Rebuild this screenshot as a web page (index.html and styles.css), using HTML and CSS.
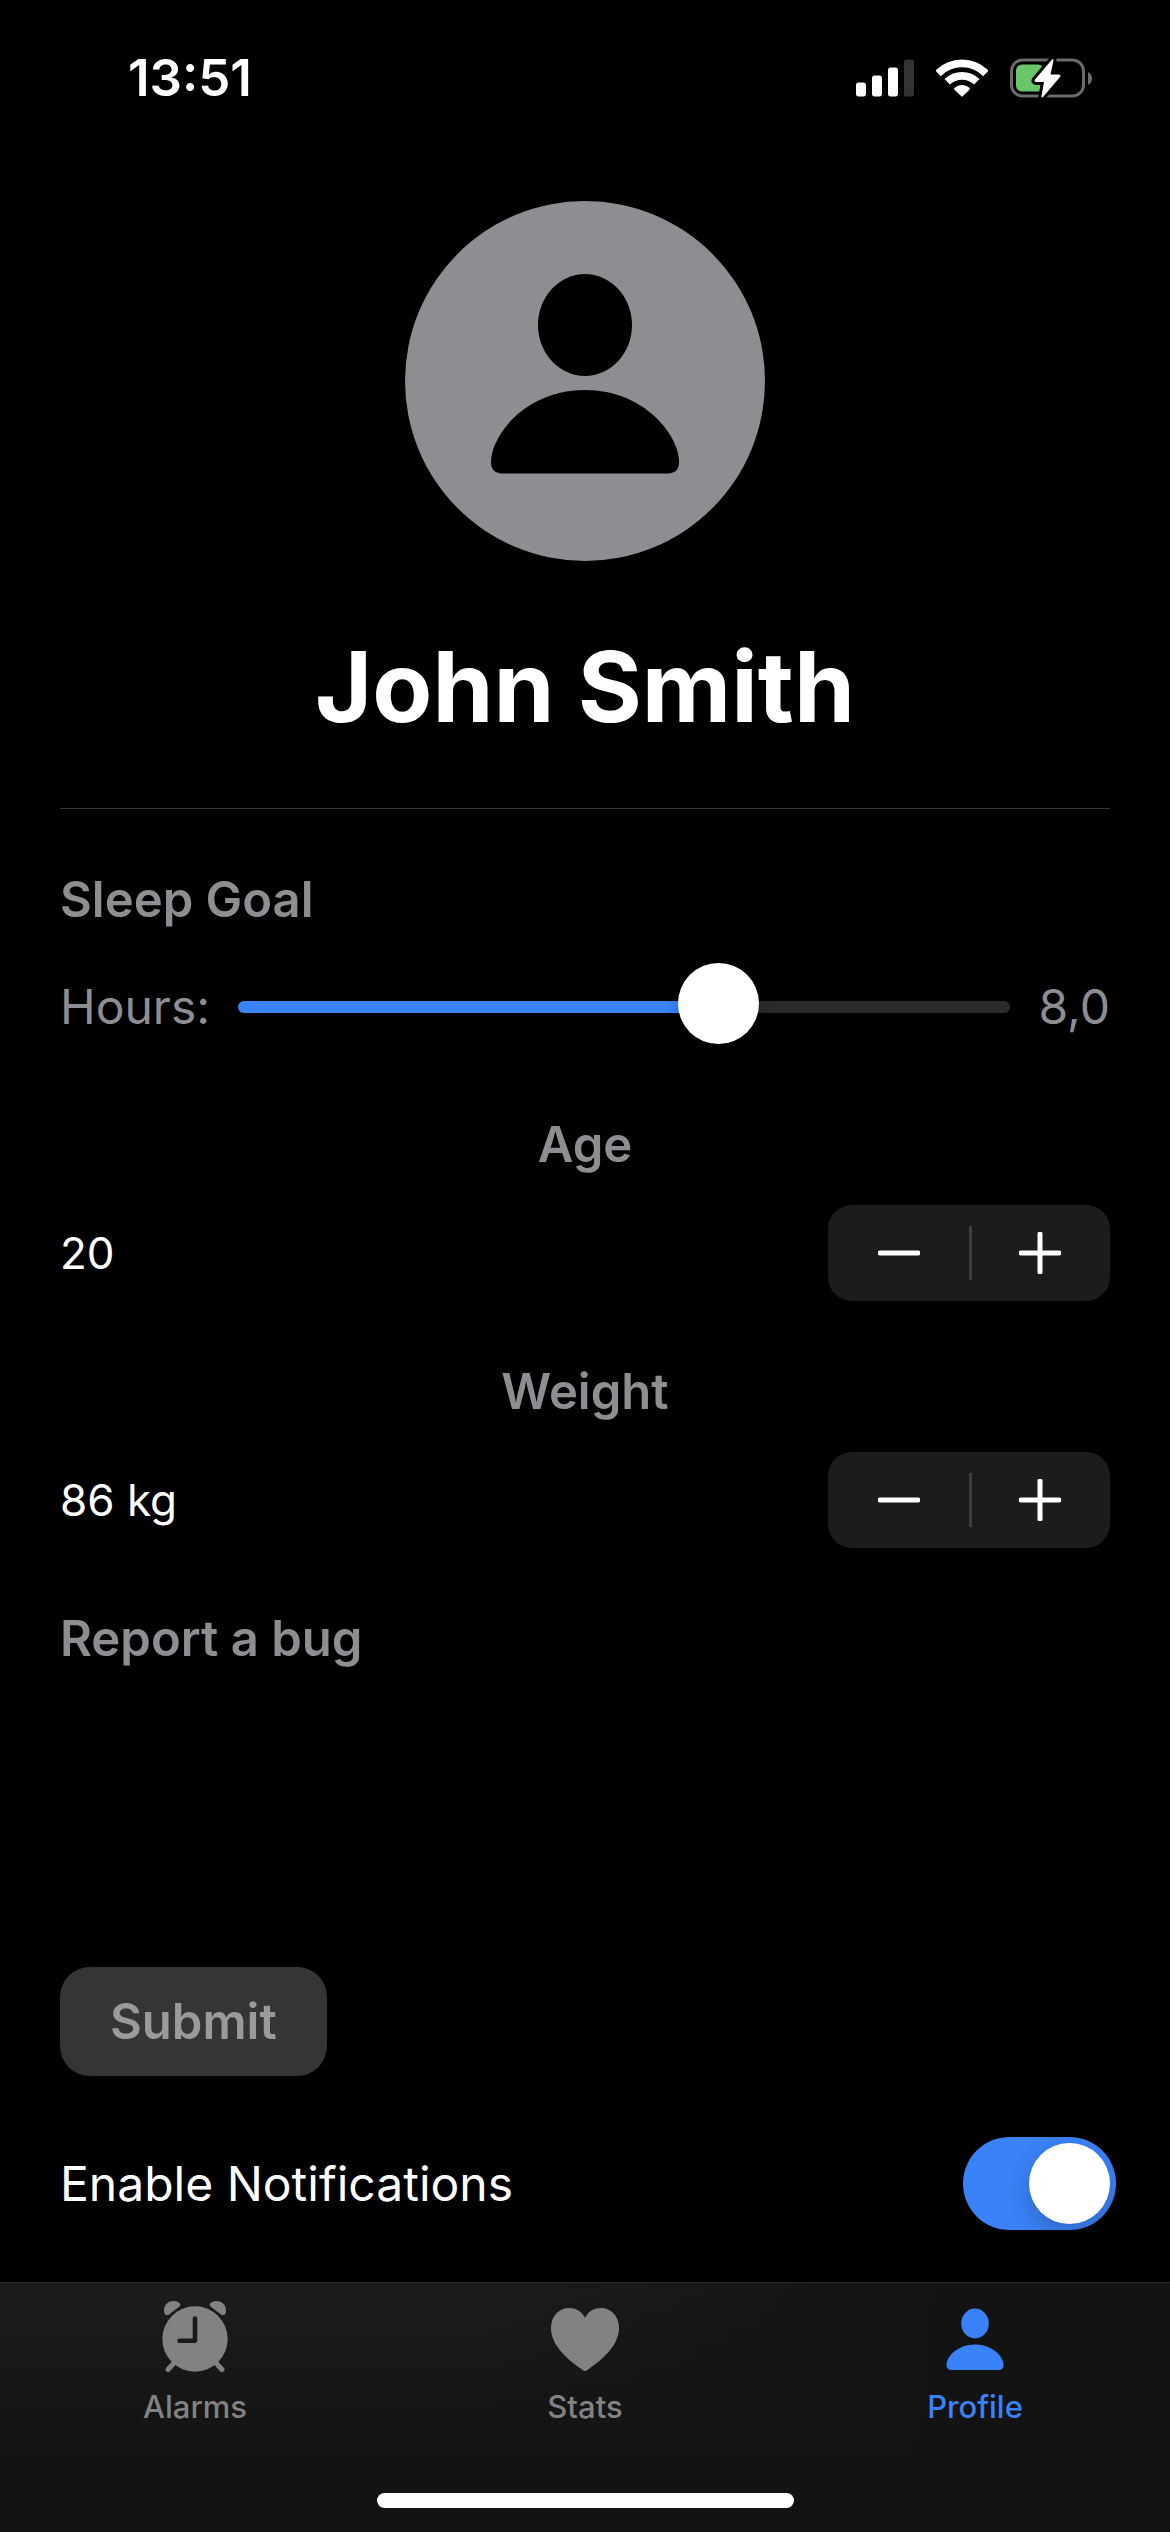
FILE: index.html
```html
<!DOCTYPE html>
<html lang="en">
<head>
<meta charset="utf-8">
<meta name="viewport" content="width=device-width, initial-scale=1">
<title>Profile</title>
<link rel="stylesheet" href="styles.css">
</head>
<body>
<header class="status-bar">
  <time class="clock">13:51</time>
  <div class="status-icons">
    <svg class="icon-signal" viewBox="78 56 174 113" role="img" aria-label="Signal">
      <g fill="#fff">
        <rect x="78" y="126" width="30" height="42" rx="8"/>
        <rect x="126" y="105" width="30" height="63" rx="8"/>
        <rect x="174" y="81" width="30" height="87" rx="8"/>
      </g>
      <rect x="222" y="57" width="30" height="111" rx="8" fill="#333"/>
    </svg>
    <svg class="icon-wifi" viewBox="318 56 154 113" role="img" aria-label="Wi-Fi">
      <g fill="none" stroke="#fff" stroke-width="23">
        <path d="M324 99A99.500 99.500 0 0 1 466 99"/>
        <path d="M351 124A62.500 62.500 0 0 1 439 124"/>
      </g>
      <path fill="#fff" d="M371 144Q381 133 395 133T419 144Q418 147 415 150L397 167Q395 169 393 167L375 150Q372 147 371 144Z"/>
    </svg>
    <svg class="icon-battery" viewBox="0 0 82 40" role="img" aria-label="Battery charging">
      <rect x="1.500" y="2" width="72" height="36" rx="11" fill="none" stroke="#6b6b6b" stroke-width="3"/>
      <path d="M78 14Q82 16 82 20.500T78 27Z" fill="#6b6b6b"/>
      <rect x="6" y="6.500" width="28" height="27" rx="6" fill="#67c667"/>
      <path d="M42 1.500Q43.500 0 43.500 2.500L40.500 16.500H49Q51.500 17 50 19L33 39Q31 40.500 31.500 38L34 24H26Q23.500 23.500 25 21.500Z" fill="#fff" stroke="#000" stroke-width="6" paint-order="stroke" stroke-linejoin="round"/>
    </svg>
  </div>
</header>

<main class="profile">
  <section class="identity">
    <svg class="avatar" viewBox="0 0 360 360" role="img" aria-label="Profile picture">
      <circle cx="180" cy="180" r="180" fill="#8e8d92"/>
      <ellipse cx="180" cy="124" rx="47" ry="51"/>
      <path d="M97 272.500Q86 272 86 261C86 235 120 189 180 189S274 235 274 261Q274 272 263 272.500Z"/>
    </svg>
    <h1 class="name">John Smith</h1>
  </section>
  <hr class="divider">

  <section class="group">
    <h2 class="heading">Sleep Goal</h2>
    <div class="row slider-row">
      <label class="muted" for="hours">Hours:</label>
      <input class="slider" id="hours" type="range" min="1" max="12" step="0.5" value="8" style="--fill: 63.6%">
      <output class="muted" for="hours">8,0</output>
    </div>
  </section>

  <section class="group">
    <h2 class="heading centered">Age</h2>
    <div class="row">
      <output class="value">20</output>
      <div class="stepper">
        <button class="step" type="button" aria-label="Decrease age"><svg class="step-icon" viewBox="0 0 42 42"><path d="M2 21H40"/></svg></button>
        <button class="step" type="button" aria-label="Increase age"><svg class="step-icon" viewBox="0 0 42 42"><path d="M2 21H40M21 2V40"/></svg></button>
      </div>
    </div>
  </section>

  <section class="group">
    <h2 class="heading centered">Weight</h2>
    <div class="row">
      <output class="value">86 kg</output>
      <div class="stepper">
        <button class="step" type="button" aria-label="Decrease weight"><svg class="step-icon" viewBox="0 0 42 42"><path d="M2 21H40"/></svg></button>
        <button class="step" type="button" aria-label="Increase weight"><svg class="step-icon" viewBox="0 0 42 42"><path d="M2 21H40M21 2V40"/></svg></button>
      </div>
    </div>
  </section>

  <form class="group">
    <label class="heading" for="bug">Report a bug</label>
    <textarea class="report" id="bug"></textarea>
    <button class="submit" type="submit" disabled>Submit</button>
  </form>

  <div class="row notify-row">
    <label class="notify-label" for="notify">Enable Notifications</label>
    <input class="switch" id="notify" type="checkbox" role="switch" checked>
  </div>
</main>

<nav class="tab-bar">
  <div class="tabs">
    <a class="tab" href="#alarms">
      <svg class="tab-icon" viewBox="0 0 72 72" aria-hidden="true">
        <g fill="#828282">
          <circle cx="36" cy="38" r="32.700"/>
          <path d="M8 14Q5 14 5 9.500C5 4 9 0 14.500 0Q19 0 21 2.500Q22 4 20.500 5.500L10 13.500Q9 14.200 8 14Z"/>
          <path d="M64 14Q67 14 67 9.500C67 4 63 0 57.500 0Q53 0 51 2.500Q50 4 51.500 5.500L62 13.500Q63 14.200 64 14Z"/>
        </g>
        <path d="M15 62L9 68.500M57 62L63 68.500" stroke="#828282" stroke-width="5" stroke-linecap="round"/>
        <path d="M36 17.500V39.800H20.500" fill="none" stroke="#1a1a1a" stroke-width="4.600" stroke-linecap="round" stroke-linejoin="round"/>
      </svg>
      <span>Alarms</span>
    </a>
    <a class="tab" href="#stats">
      <svg class="tab-icon" viewBox="0 0 72 72" aria-hidden="true">
        <path fill="#828282" d="M36 70Q35 70 33 68.500C16 57 2 43 2 27C2 15 10 7 20 7Q31 7 36 16.500Q41 7 52 7C62 7 70 15 70 27C70 43 56 57 39 68.500Q37 70 36 70Z"/>
      </svg>
      <span>Stats</span>
    </a>
    <a class="tab active" href="#profile" aria-current="page">
      <svg class="tab-icon" viewBox="0 0 72 72" aria-hidden="true">
        <g fill="#3a82f7">
          <ellipse cx="36" cy="22.500" rx="13.800" ry="15"/>
          <path d="M12 69Q7.500 68.500 7.500 64C7.500 56 18 43.500 36 43.500S64.500 56 64.500 64Q64.500 68.500 60 69Z"/>
        </g>
      </svg>
      <span>Profile</span>
    </a>
  </div>
  <div class="home-indicator"></div>
</nav>
</body>
</html>
```
FILE: styles.css
```css
* {
  box-sizing: border-box;
}

body {
  margin: 0;
  min-height: 100vh;
  display: flex;
  flex-direction: column;
  background: #000;
  color: #fff;
  font-family: Inter, "Liberation Sans", sans-serif;
  font-size: 49px;
  line-height: 60px;
}

button,
input,
textarea {
  margin: 0;
  border: 0;
  font: inherit;
}

svg {
  display: block;
}

/* Status bar */
.status-bar {
  display: flex;
  justify-content: space-between;
  align-items: center;
  height: 156px;
  padding: 0 78px 0 128px;
}

.clock {
  font-size: 51px;
  font-weight: 600;
}

.status-icons {
  display: flex;
  align-items: center;
  gap: 22px;
}

.icon-signal {
  width: 58px;
  height: 38px;
}

.icon-wifi {
  width: 52px;
  height: 38px;
}

.icon-battery {
  width: 82px;
  height: 40px;
}

/* Profile */
.profile {
  flex: 1;
  display: flex;
  flex-direction: column;
  gap: 61px;
  padding: 45px 60px 50px;
}

.identity {
  display: flex;
  flex-direction: column;
  align-items: center;
  gap: 66px;
}

.avatar {
  width: 360px;
  height: 360px;
}

.name {
  margin: 0;
  font-size: 98px;
  line-height: 120px;
  font-weight: 700;
}

.divider {
  width: 100%;
  height: 1px;
  margin: 0;
  border: 0;
  background: #38383a;
}

.group {
  display: flex;
  flex-direction: column;
  gap: 30px;
}

.heading {
  margin: 0;
  color: #8e8d92;
  font-size: 49px;
  font-weight: 600;
}

.centered {
  text-align: center;
}

.row {
  display: flex;
  justify-content: space-between;
  align-items: center;
}

.muted {
  color: #8e8d92;
}

.muted,
.notify-label {
  font-size: 48px;
}

.value {
  font-size: 44px;
}

/* Slider */
.slider-row {
  height: 94px;
  gap: 28px;
}

.slider {
  flex: 1;
  min-width: 0;
  height: 84px;
  appearance: none;
  background: transparent;
}

.slider::-webkit-slider-runnable-track {
  height: 12px;
  border-radius: 6px;
  background: linear-gradient(to right, #3a82f7 var(--fill), #2b2b2d var(--fill));
}

.slider::-webkit-slider-thumb {
  appearance: none;
  width: 81px;
  height: 81px;
  margin-top: -38px;
  border-radius: 50%;
  background: #fff;
  box-shadow: 0 2px 16px rgba(0, 0, 0, 0.2);
}

/* Stepper */
.stepper {
  display: flex;
  width: 282px;
  height: 96px;
  border-radius: 24px;
  background: #1c1c1e;
}

.step {
  flex: 1;
  display: grid;
  place-items: center;
  padding: 0;
  background: transparent;
}

.step + .step {
  background: linear-gradient(#3e3e40, #3e3e40) left center / 3px 54px no-repeat;
}

.step-icon {
  width: 42px;
  height: 42px;
  fill: none;
  stroke: #fff;
  stroke-width: 5;
  stroke-linecap: round;
}

/* Bug report */
.report {
  width: 100%;
  height: 238px;
  padding: 0;
  resize: none;
  background: #000;
  color: #fff;
}

.submit {
  align-self: flex-start;
  height: 109px;
  padding: 0 50px;
  border-radius: 30px;
  background: #353535;
  color: #9a9a9a;
  font-weight: 600;
}

/* Switch */
.notify-row {
  margin-right: -6px;
}

.switch {
  display: flex;
  appearance: none;
  width: 153px;
  height: 93px;
  padding: 6px;
  border-radius: 47px;
  background: #3a82f7;
  overflow: hidden;
}

.switch::before {
  content: "";
  width: 81px;
  height: 81px;
  border-radius: 50%;
  background: #fff;
  box-shadow: 0 8px 22px rgba(0, 0, 0, 0.2);
}

.switch:checked {
  justify-content: flex-end;
}

/* Tab bar */
.tab-bar {
  display: flex;
  flex-direction: column;
  justify-content: space-between;
  align-items: center;
  height: 250px;
  padding: 18px 0 24px;
  border-top: 1px solid #2c2c2c;
  background:
    linear-gradient(to right, transparent 40%, #131313 80%),
    linear-gradient(#1c1c1c, #131313 70%);
}

.tabs {
  display: flex;
  width: 100%;
}

.tab {
  flex: 1;
  display: flex;
  flex-direction: column;
  align-items: center;
  gap: 16px;
  color: #828282;
  font-size: 31px;
  line-height: 36px;
  font-weight: 500;
  text-decoration: none;
}

.active {
  color: #3a82f7;
}

.tab-icon {
  width: 72px;
  height: 72px;
}

.home-indicator {
  width: 417px;
  height: 15px;
  border-radius: 8px;
  background: #fff;
}
```
